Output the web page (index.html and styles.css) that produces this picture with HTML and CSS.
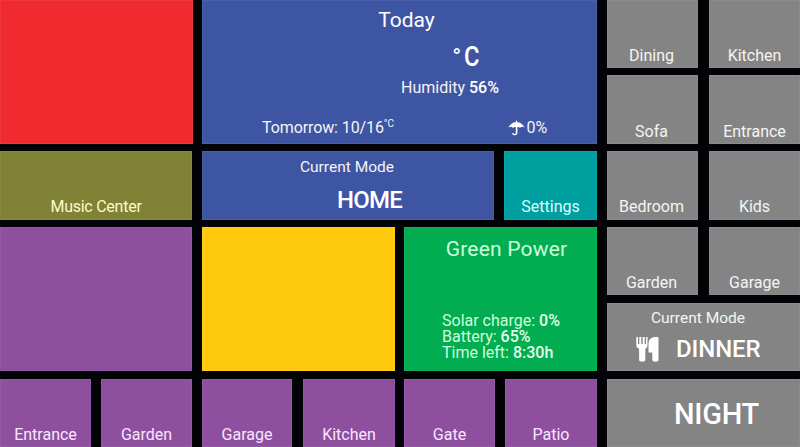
FILE: index.html
```html
<!DOCTYPE html>
<html lang="en">
<head>
<meta charset="utf-8">
<title>Home Control</title>
<link rel="stylesheet" href="styles.css">
</head>
<body>
<main class="board">
  <section class="tile red"></section>
  <section class="tile weather">
    <h1 class="title today">Today</h1>
    <div class="temp"><span class="degree">°</span><span class="celsius">C</span></div>
    <div class="humidity">Humidity <b>56%</b></div>
    <div class="forecast">
      <span class="tomorrow">Tomorrow: 10/16<span class="unit">°C</span></span>
      <span class="rain">
        <svg class="umbrella" viewBox="0 0 17 16"><path d="M8 .5h1v1.400c3.400.3 6.100 2.300 7.700 5.700-1.700-1.300-3.500-1.200-4.700.3-.8-.9-1.700-1.100-2.600-.7v5.600c0 3.400-5.200 3.200-5.200.2h1.500c0 1.300 2.100 1.300 2.100-.3V7.200c-.9-.4-1.900-.2-2.700.7C3.900 6.400 2 6.300.3 7.600 1.900 4.200 4.600 2.200 8 1.900z"/></svg><span>0%</span>
      </span>
    </div>
  </section>
  <section class="tile music"><span class="label">Music Center</span></section>
  <section class="tile mode">
    <span class="caption">Current Mode</span>
    <strong class="home">HOME</strong>
  </section>
  <section class="tile settings"><span class="label">Settings</span></section>
  <section class="tile media"></section>
  <section class="tile yellow"></section>
  <section class="tile power">
    <h2 class="title green">Green Power</h2>
    <div class="stats">
      <div class="stat">Solar charge: <b>0%</b></div>
      <div class="stat">Battery: <b>65%</b></div>
      <div class="stat">Time left: <b>8:30h</b></div>
    </div>
  </section>
  <section class="tile purple p1"><span class="label">Entrance</span></section>
  <section class="tile purple p2"><span class="label">Garden</span></section>
  <section class="tile purple p3"><span class="label">Garage</span></section>
  <section class="tile purple p4"><span class="label">Kitchen</span></section>
  <section class="tile purple p5"><span class="label">Gate</span></section>
  <section class="tile purple p6"><span class="label">Patio</span></section>
  <section class="tile gray left r1"><span class="label">Dining</span></section>
  <section class="tile gray right r1"><span class="label">Kitchen</span></section>
  <section class="tile gray left r2"><span class="label">Sofa</span></section>
  <section class="tile gray right r2"><span class="label">Entrance</span></section>
  <section class="tile gray left r3"><span class="label">Bedroom</span></section>
  <section class="tile gray right r3"><span class="label">Kids</span></section>
  <section class="tile gray left r4"><span class="label">Garden</span></section>
  <section class="tile gray right r4"><span class="label">Garage</span></section>
  <section class="tile gray dinner">
    <span class="caption">Current Mode</span>
    <div class="meal">
      <svg class="cutlery" viewBox="0 0 23 26"><path d="M.3 1h1.700v7h1.300V1h2v7h1.400V1h2v7H10V1h1.500v8.500c0 1.600-.8 2.600-2.200 3.200V24c0 2.200-6.200 2.200-6.200 0V12.700C1.400 12 .3 11 .3 9.500zM22.500 2v22c0 2.200-6.200 2.200-6.200 0v-7.500h-3.800V8c0-4.500 2.500-7 7.500-7h1.500q1 0 1 1z"/></svg>
      <strong class="dinner-name">DINNER</strong>
    </div>
  </section>
  <section class="tile gray night"><strong class="night-name">NIGHT</strong></section>
</main>
</body>
</html>
```
FILE: styles.css
```css
* { box-sizing: border-box; }
body {
  margin: 0;
  background: #020307;
  color: #f4f4f4;
  font-family: Roboto, "Liberation Sans", sans-serif;
  font-size: 16px;
  overflow: hidden;
}
/* Odd tracks hold tiles, even tracks are the dividers. */
.board {
  display: grid;
  width: 800px;
  height: 447px;
  grid-template-columns: 91px 10px 91px 10px 90px 11px 92px 9px 91px 10px 92px 10px 91px 11px 91px;
  grid-template-rows: 68px 7px 69px 7px 69px 7px 68px 8px 68px 8px 68px;
}
.tile {
  display: flex;
  flex-direction: column;
  align-items: center;
  min-width: 0;
  white-space: nowrap;
  box-shadow: inset 0 0 0 1px rgba(255, 255, 255, .06);
}
.label { margin-top: auto; line-height: 18px; padding-bottom: 3px; }
.music .label, .settings .label, .r3 .label { padding-bottom: 4px; }
b, strong { font-weight: 500; color: #fff; }
.title { margin: 0; font-weight: 400; font-size: 21px; line-height: 24px; }

.red { grid-area: 1 / 1 / 4 / 4; background: #f02a2e; margin-right: -1px; }
.weather { grid-area: 1 / 5 / 4 / 12; background: #3e55a4; padding-top: 8px; }
.music { grid-area: 5 / 1 / 6 / 4; background: #808235; color: #fbfbd0; letter-spacing: -.25px; }
.mode { grid-area: 5 / 5 / 6 / 10; background: #3e55a4; padding-top: 7px; margin-right: 1px; }
.settings { grid-area: 5 / 11; background: #009f9f; color: #d8ffff; margin-left: -1px; }
.media { grid-area: 7 / 1 / 10 / 4; background: #8e4f9f; }
.yellow { grid-area: 7 / 5 / 10 / 8; background: #ffc90d; }
.power { grid-area: 7 / 9 / 10 / 12; background: #02ad52; color: #cbffd9; padding-top: 10px; }

.purple { background: #8e4f9f; color: #fbe6ff; }
.p1 { grid-area: 11 / 1; }
.p2 { grid-area: 11 / 3; }
.p3 { grid-area: 11 / 5; }
.p4 { grid-area: 11 / 7; }
.p5 { grid-area: 11 / 9; }
.p6 { grid-area: 11 / 11; }

.gray { background: #848484; }
.left { grid-column: 13; }
.right { grid-column: 15; }
.left .label { margin-right: 2px; }
.r1 { grid-row: 1; }
.r2 { grid-row: 3; }
.r3 { grid-row: 5; }
.r4 { grid-row: 7; }
.dinner { grid-area: 9 / 13 / 10 / 16; padding-top: 6px; }
.night { grid-area: 11 / 13 / 12 / 16; align-items: flex-start; padding: 18px 0 0 67px; }

.today { margin-left: 14px; color: #fff; }
.temp { display: flex; gap: 2px; margin: 8px 0 0 134px; color: #fff; font-size: 27px; line-height: 34px; }
.degree { font-size: 24px; }
.celsius { font-weight: 500; transform: scaleX(.88); }
.humidity { margin: 5px 0 0 101px; line-height: 18px; }
.forecast { display: flex; align-self: stretch; justify-content: space-between; margin-top: 22px; padding: 0 50px 0 60px; line-height: 18px; letter-spacing: -.1px; }
.unit { font-size: 10px; vertical-align: 6px; line-height: 1; }
.rain { display: flex; gap: 1px; }
.umbrella { width: 17px; height: 16px; margin-top: 1px; fill: #fff; }

.caption { line-height: 18px; font-size: 15.5px; }
.mode .caption { margin-right: 2px; }
.dinner .caption { margin-right: 11px; }
.home { margin: 10px 0 0 43px; font-size: 24px; line-height: 28px; letter-spacing: -.8px; }
.green { margin-left: 12px; letter-spacing: .2px; }
.stats { align-self: flex-start; margin: 52px 0 0 38px; }
.stat { line-height: 16px; }
.stat b { color: #e2ffe9; }
.meal { display: flex; align-self: stretch; align-items: center; padding-left: 29px; margin-top: 8px; gap: 17px; }
.cutlery { width: 23px; height: 26px; fill: #fff; }
.dinner-name { font-size: 24px; line-height: 28px; letter-spacing: -.1px; }
.night-name { font-size: 29px; line-height: 34px; letter-spacing: -.3px; }
```
